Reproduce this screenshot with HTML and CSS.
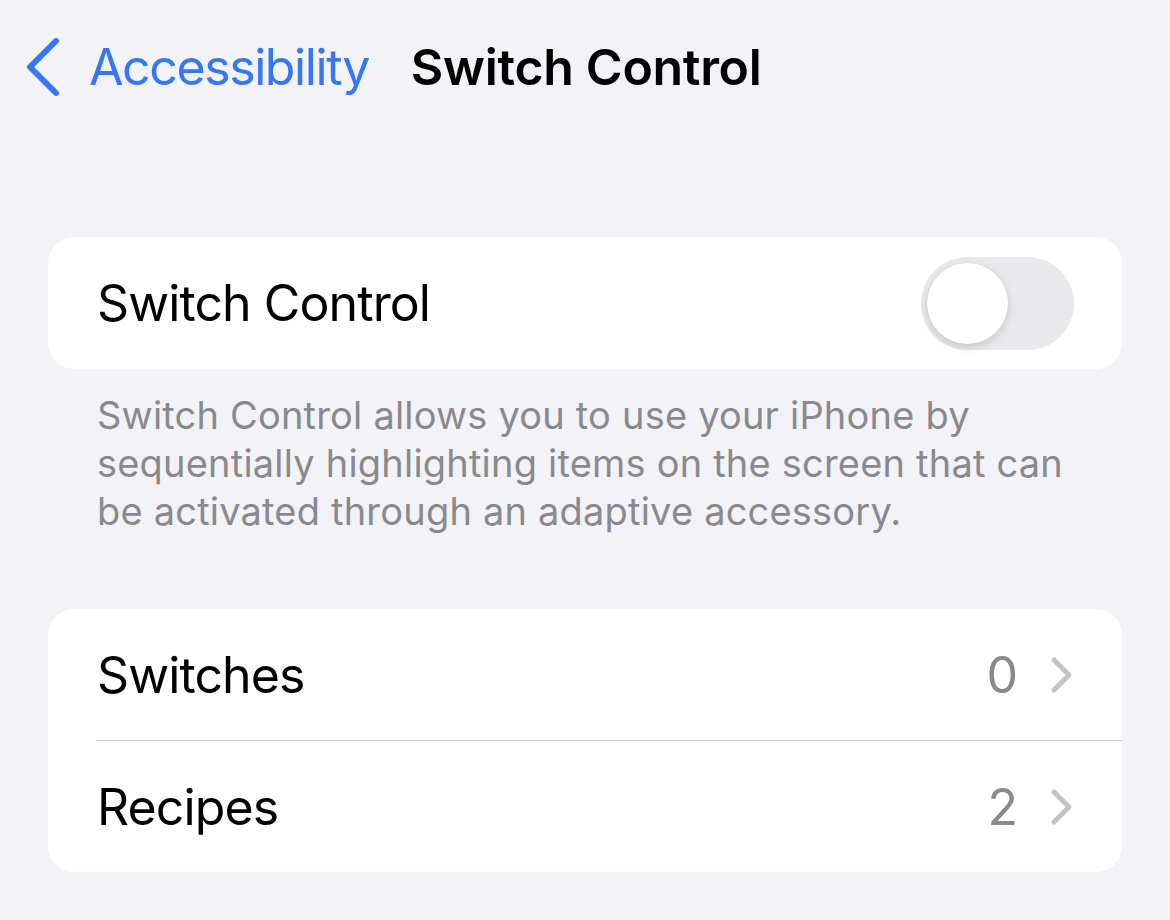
FILE: index.html
```html
<!DOCTYPE html>
<html lang="en">
<head>
    <meta charset="UTF-8">
    <meta name="viewport" content="width=device-width, initial-scale=1.0">
    <title>Switch Control</title>
    <link rel="stylesheet" href="styles.css">
</head>
<body>
    <div class="nav-bar">
        <a href="#" class="back-link">
            <svg class="back-chevron" width="36" height="58" viewBox="0 0 36 58">
                <path d="M31 3 L5 29 L31 55" fill="none" stroke="#3478f6" stroke-width="6" stroke-linecap="round" stroke-linejoin="round"/>
            </svg>
            <span class="back-text">Accessibility</span>
        </a>
        <h1 class="nav-title">Switch Control</h1>
    </div>

    <div class="group">
        <div class="row row-tall">
            <span class="row-label">Switch Control</span>
            <div class="toggle">
                <div class="toggle-knob"></div>
            </div>
        </div>
    </div>
    <p class="group-footer">Switch Control allows you to use your iPhone by sequentially highlighting items on the screen that can be activated through an adaptive accessory.</p>

    <div class="group group-second">
        <div class="row">
            <span class="row-label">Switches</span>
            <span class="row-value">0</span>
            <svg class="row-chevron" width="24" height="38" viewBox="0 0 24 38">
                <path d="M4 4 L19 19 L4 34" fill="none" stroke="#c4c4c7" stroke-width="5" stroke-linecap="round" stroke-linejoin="round"/>
            </svg>
        </div>
        <div class="row">
            <span class="row-label">Recipes</span>
            <span class="row-value">2</span>
            <svg class="row-chevron" width="24" height="38" viewBox="0 0 24 38">
                <path d="M4 4 L19 19 L4 34" fill="none" stroke="#c4c4c7" stroke-width="5" stroke-linecap="round" stroke-linejoin="round"/>
            </svg>
        </div>
    </div>
</body>
</html>
```
FILE: styles.css
```css
/* Общие стили */
body {
    font-family: Inter, "Noto Sans", sans-serif;
    margin: 0;
    padding: 0;
    background-color: #f2f2f7;
    color: #000;
}

/* Навигация */
.nav-bar {
    display: flex;
    align-items: center;
    height: 134px;
    padding-left: 25px;
}

.back-link {
    display: flex;
    align-items: center;
    text-decoration: none;
    color: #3478f6;
}

.back-chevron {
    margin-right: 28px;
}

.back-text {
    font-size: 50px;
    letter-spacing: -1.4px;
}

.nav-title {
    margin: 0 0 0 42px;
    font-size: 50px;
    font-weight: 600;
    letter-spacing: -0.3px;
}

/* Группы */
.group {
    margin: 103px 48px 0 48px;
    background-color: #fff;
    border-radius: 26px;
    overflow: hidden;
}

.group-second {
    margin-top: 74px;
}

.row {
    display: flex;
    align-items: center;
    height: 131px;
    padding: 0 48px 0 49px;
}

.row-tall {
    height: 132px;
}

.row + .row {
    border-top: 1px solid #c8c8cc;
    margin-left: 48px;
    padding-left: 1px;
}

.row-label {
    flex: 1;
    font-size: 50px;
    letter-spacing: -0.9px;
}

.row-value {
    font-size: 50px;
    color: #8a8a8e;
    margin-right: 32px;
}

/* Переключатель */
.toggle {
    width: 153px;
    height: 93px;
    border-radius: 47px;
    background-color: #e9e9eb;
    position: relative;
}

.toggle-knob {
    position: absolute;
    top: 6px;
    left: 6px;
    width: 81px;
    height: 81px;
    border-radius: 50%;
    background-color: #fff;
    box-shadow: 0 3px 8px rgba(0, 0, 0, 0.15), 0 0 1px rgba(0, 0, 0, 0.1);
}

/* Подпись под группой */
.group-footer {
    margin: 22px 80px 0 97px;
    font-size: 38px;
    line-height: 48px;
    color: #8a8a8e;
    letter-spacing: 0.2px;
}
```
